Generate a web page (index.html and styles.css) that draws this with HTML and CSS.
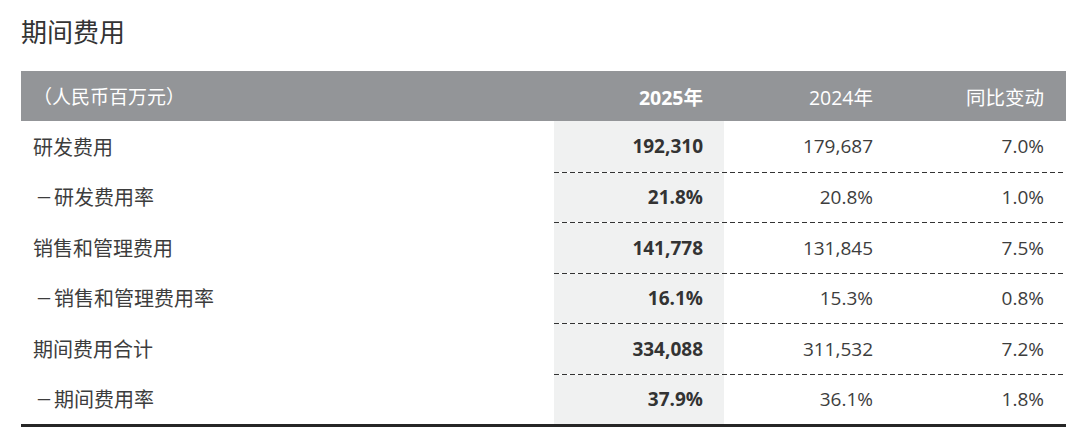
FILE: index.html
```html
<!DOCTYPE html>
<html lang="zh-CN">
<head>
<meta charset="utf-8">
<title>期间费用</title>
<link rel="stylesheet" href="styles.css">
</head>
<body>
<div class="page">
  <h1 class="title">期间费用</h1>
  <div class="table">
    <div class="row head">
      <div class="label">（人民币百万元）</div>
      <div class="vals">
        <div class="cell cur">2025年</div>
        <div class="cell">2024年</div>
        <div class="cell">同比变动</div>
      </div>
    </div>
    <div class="row first">
      <div class="label">研发费用</div>
      <div class="vals">
        <div class="cell cur">192,310</div>
        <div class="cell">179,687</div>
        <div class="cell">7.0%</div>
      </div>
    </div>
    <div class="row">
      <div class="label"><span class="dash">－</span>研发费用率</div>
      <div class="vals">
        <div class="cell cur">21.8%</div>
        <div class="cell">20.8%</div>
        <div class="cell">1.0%</div>
      </div>
    </div>
    <div class="row">
      <div class="label">销售和管理费用</div>
      <div class="vals">
        <div class="cell cur">141,778</div>
        <div class="cell">131,845</div>
        <div class="cell">7.5%</div>
      </div>
    </div>
    <div class="row">
      <div class="label"><span class="dash">－</span>销售和管理费用率</div>
      <div class="vals">
        <div class="cell cur">16.1%</div>
        <div class="cell">15.3%</div>
        <div class="cell">0.8%</div>
      </div>
    </div>
    <div class="row">
      <div class="label">期间费用合计</div>
      <div class="vals">
        <div class="cell cur">334,088</div>
        <div class="cell">311,532</div>
        <div class="cell">7.2%</div>
      </div>
    </div>
    <div class="row last">
      <div class="label"><span class="dash">－</span>期间费用率</div>
      <div class="vals">
        <div class="cell cur">37.9%</div>
        <div class="cell">36.1%</div>
        <div class="cell">1.8%</div>
      </div>
    </div>
  </div>
</div>
</body>
</html>
```

FILE: styles.css
```css
html, body {
  margin: 0;
  padding: 0;
  background: #ffffff;
}

body {
  font-family: "Open Sans", "Noto Sans CJK SC", sans-serif;
  color: #3d3d3d;
}

.page {
  width: 1045px;
  padding: 0 0 0 21px;
}

.title {
  margin: 0;
  padding: 14px 0 0 0;
  height: 71px;
  box-sizing: border-box;
  font-size: 26px;
  line-height: 36px;
  font-weight: 400;
  color: #333333;
}

.table {
  width: 1045px;
  border-bottom: 3px solid #262626;
}

.row {
  display: flex;
  height: 50.5px;
  font-size: 19px;
}

.row.head {
  height: 50px;
  background: #939598;
  color: #ffffff;
  font-size: 19.5px;
}

.label {
  width: 533px;
  flex: none;
  box-sizing: border-box;
  padding-left: 12px;
  display: flex;
  align-items: center;
  font-size: 20px;
}

.row.head .label {
  font-size: 19px;
}

.dash {
  display: inline-block;
  width: 20px;
  font-size: 17px;
  text-align: center;
  margin-left: 1px;
}

.vals {
  flex: 1;
  display: flex;
  padding-top: 1px;
  box-sizing: border-box;
  background: repeating-linear-gradient(to right, #333333 0 5px, transparent 5px 8px) left top / 100% 1px no-repeat;
}

.row.head .vals,
.row.first .vals {
  padding-top: 0;
  background: none;
}

.cell {
  width: 170px;
  flex: none;
  box-sizing: border-box;
  padding-right: 21px;
  display: flex;
  align-items: center;
  justify-content: flex-end;
}

.cell:last-child {
  width: 172px;
  padding-right: 22px;
}

.cell.cur {
  font-weight: 700;
  background: #f0f1f1;
  color: #333333;
}

.row.head .cell.cur {
  background: transparent;
  color: #ffffff;
}
```
